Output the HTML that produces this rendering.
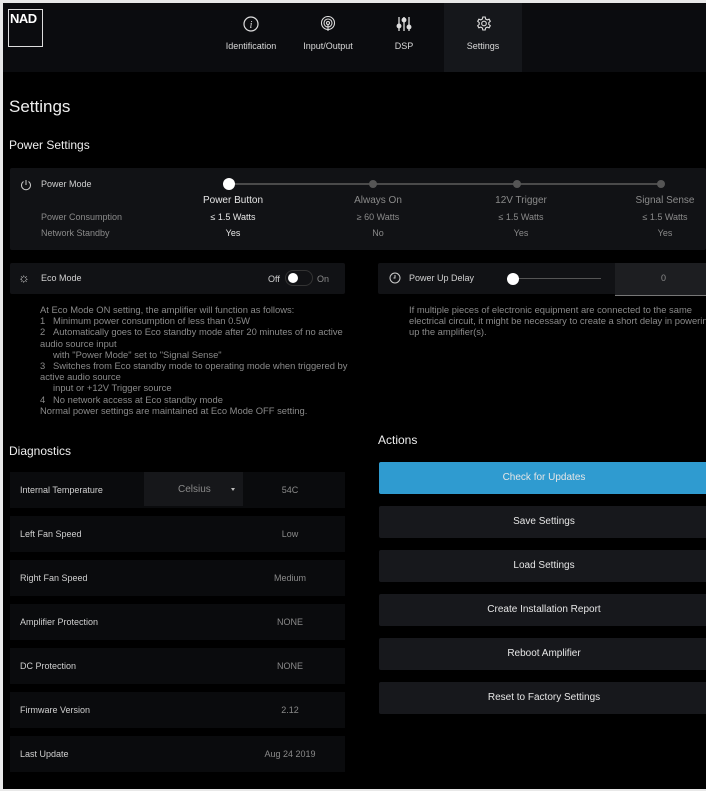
<!DOCTYPE html>
<html><head><meta charset="utf-8"><style>
*{margin:0;padding:0;box-sizing:border-box}
body{width:706px;height:791px;background:#e8e8e8;font-family:"Liberation Sans",sans-serif;overflow:hidden;position:relative}
#app{position:absolute;left:3px;top:3px;width:703px;height:786px;background:#000;overflow:hidden}
.a{position:absolute}
.nav{left:0;top:0;width:703px;height:69px;background:#0b0c0f}
.tab{top:0;height:69px;width:80px;text-align:center;color:#d8d8d8;font-size:9px}
.tab svg{position:absolute;left:32px;top:13px}
.tab span{position:absolute;left:0;right:0;top:38px}
.card{background:#111215;border-radius:2px}
.t{color:#d0d0d0;font-size:9px;white-space:nowrap}
.g{color:#8a8a8a}
.c{text-align:center}
.row{left:7px;width:335px;height:36px;background:#0a0b0d}
.btn{left:376px;width:330px;height:32px;background:#17181c;border-radius:2px;color:#e6e6e6;font-size:10px;text-align:center;line-height:32px}
.p{font-size:9.4px;line-height:11.2px;color:#8a8a8a}
</style></head><body><div id="app">
<div class="a nav"></div>
<div class="a" style="left:5px;top:6px;width:35px;height:38px;border:1.5px solid #ddd;color:#fff;font-weight:bold;font-size:13px;line-height:17px;padding-left:1px;letter-spacing:-0.5px">NAD</div>
<div class="a tab" style="left:208px"><svg width="16" height="16" viewBox="0 0 16 16"><circle cx="8" cy="8" r="7" fill="none" stroke="#ddd" stroke-width="1.2"/><text x="8" y="12" font-size="10" font-style="italic" font-family="Liberation Serif" fill="#ddd" text-anchor="middle">i</text></svg><span>Identification</span></div>
<div class="a tab" style="left:285px"><svg width="16" height="16" viewBox="0 0 16 16" fill="none" stroke="#ddd" stroke-width="1.1"><circle cx="8" cy="7" r="6.5"/><circle cx="8" cy="7" r="4"/><circle cx="8" cy="7" r="1.5"/><path d="M8 8.5V15"/></svg><span>Input/Output</span></div>
<div class="a tab" style="left:361px"><svg width="16" height="16" viewBox="0 0 16 16" stroke="#ddd" stroke-width="1.3"><path d="M3 1v14M8 1v14M13 1v14"/><circle cx="3" cy="10" r="1.8" fill="#ddd"/><circle cx="8" cy="4" r="1.8" fill="#ddd"/><circle cx="13" cy="11" r="1.8" fill="#ddd"/></svg><span>DSP</span></div>
<div class="a tab" style="left:441px;width:78px;background:#15171b"><svg width="16" height="16" viewBox="0 0 16 16" fill="none" stroke="#ddd" stroke-width="1.1"><path d="M6.8 1h2.4l.4 2 1.6.9 1.9-.7 1.2 2.1-1.5 1.3v1.8l1.5 1.3-1.2 2.1-1.9-.7-1.6.9-.4 2H6.8l-.4-2-1.6-.9-1.9.7-1.2-2.1 1.5-1.3V6.6L1.7 5.3l1.2-2.1 1.9.7 1.6-.9z"/><circle cx="8" cy="7.5" r="2.3"/></svg><span>Settings</span></div>

<div class="a" style="left:6px;top:94px;color:#eee;font-size:17px">Settings</div>
<div class="a" style="left:6px;top:135px;color:#eee;font-size:12px">Power Settings</div>

<div class="a card" style="left:7px;top:165px;width:696px;height:82px"></div>
<svg class="a" style="left:17px;top:176px" width="12" height="12" viewBox="0 0 12 12" fill="none" stroke="#ccc" stroke-width="1"><path d="M3.5 2.5A4.5 4.5 0 1 0 8.5 2.5M6 1v5"/></svg>
<div class="a t" style="left:38px;top:176px">Power Mode</div>
<div class="a" style="left:229px;top:180px;width:430px;height:2px;background:#4a4a4a"></div>
<div class="a" style="left:220px;top:175px;width:12px;height:12px;border-radius:50%;background:#fff"></div>
<div class="a" style="left:366px;top:177px;width:8px;height:8px;border-radius:50%;background:#555"></div>
<div class="a" style="left:510px;top:177px;width:8px;height:8px;border-radius:50%;background:#555"></div>
<div class="a" style="left:654px;top:177px;width:8px;height:8px;border-radius:50%;background:#555"></div>
<div class="a t g" style="left:38px;top:209px">Power Consumption</div>
<div class="a t g" style="left:38px;top:225px">Network Standby</div>
<div class="a t c" style="left:180px;width:100px;top:192px;font-size:10px;color:#e6e6e6">Power Button</div>
<div class="a t c" style="left:180px;width:100px;top:209px;color:#e6e6e6">≤ 1.5 Watts</div>
<div class="a t c" style="left:180px;width:100px;top:225px;color:#e6e6e6">Yes</div>
<div class="a t c g" style="left:325px;width:100px;top:192px;font-size:10px">Always On</div>
<div class="a t c g" style="left:325px;width:100px;top:209px">≥ 60 Watts</div>
<div class="a t c g" style="left:325px;width:100px;top:225px">No</div>
<div class="a t c g" style="left:468px;width:100px;top:192px;font-size:10px">12V Trigger</div>
<div class="a t c g" style="left:468px;width:100px;top:209px">≤ 1.5 Watts</div>
<div class="a t c g" style="left:468px;width:100px;top:225px">Yes</div>
<div class="a t c g" style="left:612px;width:100px;top:192px;font-size:10px">Signal Sense</div>
<div class="a t c g" style="left:612px;width:100px;top:209px">≤ 1.5 Watts</div>
<div class="a t c g" style="left:612px;width:100px;top:225px">Yes</div>

<div class="a card" style="left:7px;top:260px;width:335px;height:31px"></div>
<div class="a" style="left:15px;top:267px;color:#ccc;font-size:13px">☼</div>
<div class="a t" style="left:38px;top:270px">Eco Mode</div>
<div class="a t" style="left:265px;top:271px">Off</div>
<div class="a" style="left:282px;top:267px;width:28px;height:16px;border:1px solid #333;border-radius:8px"></div>
<div class="a" style="left:285px;top:270px;width:10px;height:10px;border-radius:50%;background:#fff"></div>
<div class="a t g" style="left:314px;top:271px">On</div>

<div class="a card" style="left:375px;top:260px;width:328px;height:31px"></div>
<svg class="a" style="left:386px;top:269px" width="12" height="12" viewBox="0 0 12 12" fill="none" stroke="#ccc" stroke-width="1"><circle cx="6" cy="6" r="5"/><path d="M6 3v3H4.5"/></svg>
<div class="a t" style="left:406px;top:270px">Power Up Delay</div>
<div class="a" style="left:508px;top:275px;width:90px;height:1px;background:#555"></div>
<div class="a" style="left:504px;top:270px;width:12px;height:12px;border-radius:50%;background:#fff"></div>
<div class="a" style="left:612px;top:260px;width:91px;height:33px;background:#1d1e21;border-bottom:1px solid #777"></div>
<div class="a t g" style="left:658px;top:270px">0</div>

<div class="a p" style="left:37px;top:301px;width:312px">At Eco Mode ON setting, the amplifier will function as follows:<br>1 &nbsp;&nbsp;Minimum power consumption of less than 0.5W<br>2 &nbsp;&nbsp;Automatically goes to Eco standby mode after 20 minutes of no active audio source input<br>&nbsp;&nbsp;&nbsp;&nbsp;&nbsp;with "Power Mode" set to "Signal Sense"<br>3 &nbsp;&nbsp;Switches from Eco standby mode to operating mode when triggered by active audio source<br>&nbsp;&nbsp;&nbsp;&nbsp;&nbsp;input or +12V Trigger source<br>4 &nbsp;&nbsp;No network access at Eco standby mode<br>Normal power settings are maintained at Eco Mode OFF setting.</div>
<div class="a p" style="left:406px;top:301px;width:300px;white-space:nowrap">If multiple pieces of electronic equipment are connected to the same<br>electrical circuit, it might be necessary to create a short delay in powering<br>up the amplifier(s).</div>

<div class="a" style="left:6px;top:441px;color:#eee;font-size:12px">Diagnostics</div>
<div class="a" style="left:375px;top:430px;color:#eee;font-size:12px">Actions</div>

<div class="a row" style="top:469px"></div>
<div class="a" style="left:141px;top:469px;width:99px;height:34px;background:#16171a"></div>
<div class="a t g" style="left:175px;top:481px;font-size:10px">Celsius</div>
<div class="a" style="left:228px;top:485px;border-left:2.5px solid transparent;border-right:2.5px solid transparent;border-top:3px solid #bbb"></div>
<div class="a t" style="left:17px;top:482px">Internal Temperature</div><div class="a t g c" style="left:237px;width:100px;top:482px">54C</div>
<div class="a row" style="top:513px"></div><div class="a t" style="left:17px;top:526px">Left Fan Speed</div><div class="a t g c" style="left:237px;width:100px;top:526px">Low</div>
<div class="a row" style="top:557px"></div><div class="a t" style="left:17px;top:570px">Right Fan Speed</div><div class="a t g c" style="left:237px;width:100px;top:570px">Medium</div>
<div class="a row" style="top:601px"></div><div class="a t" style="left:17px;top:614px">Amplifier Protection</div><div class="a t g c" style="left:237px;width:100px;top:614px">NONE</div>
<div class="a row" style="top:645px"></div><div class="a t" style="left:17px;top:658px">DC Protection</div><div class="a t g c" style="left:237px;width:100px;top:658px">NONE</div>
<div class="a row" style="top:689px"></div><div class="a t" style="left:17px;top:702px">Firmware Version</div><div class="a t g c" style="left:237px;width:100px;top:702px">2.12</div>
<div class="a row" style="top:733px"></div><div class="a t" style="left:17px;top:746px">Last Update</div><div class="a t g c" style="left:237px;width:100px;top:746px">Aug 24 2019</div>

<div class="a btn" style="top:459px;background:#2f9bd0">Check for Updates</div>
<div class="a btn" style="top:503px">Save Settings</div>
<div class="a btn" style="top:547px">Load Settings</div>
<div class="a btn" style="top:591px">Create Installation Report</div>
<div class="a btn" style="top:635px">Reboot Amplifier</div>
<div class="a btn" style="top:679px">Reset to Factory Settings</div>
</div></body></html>
